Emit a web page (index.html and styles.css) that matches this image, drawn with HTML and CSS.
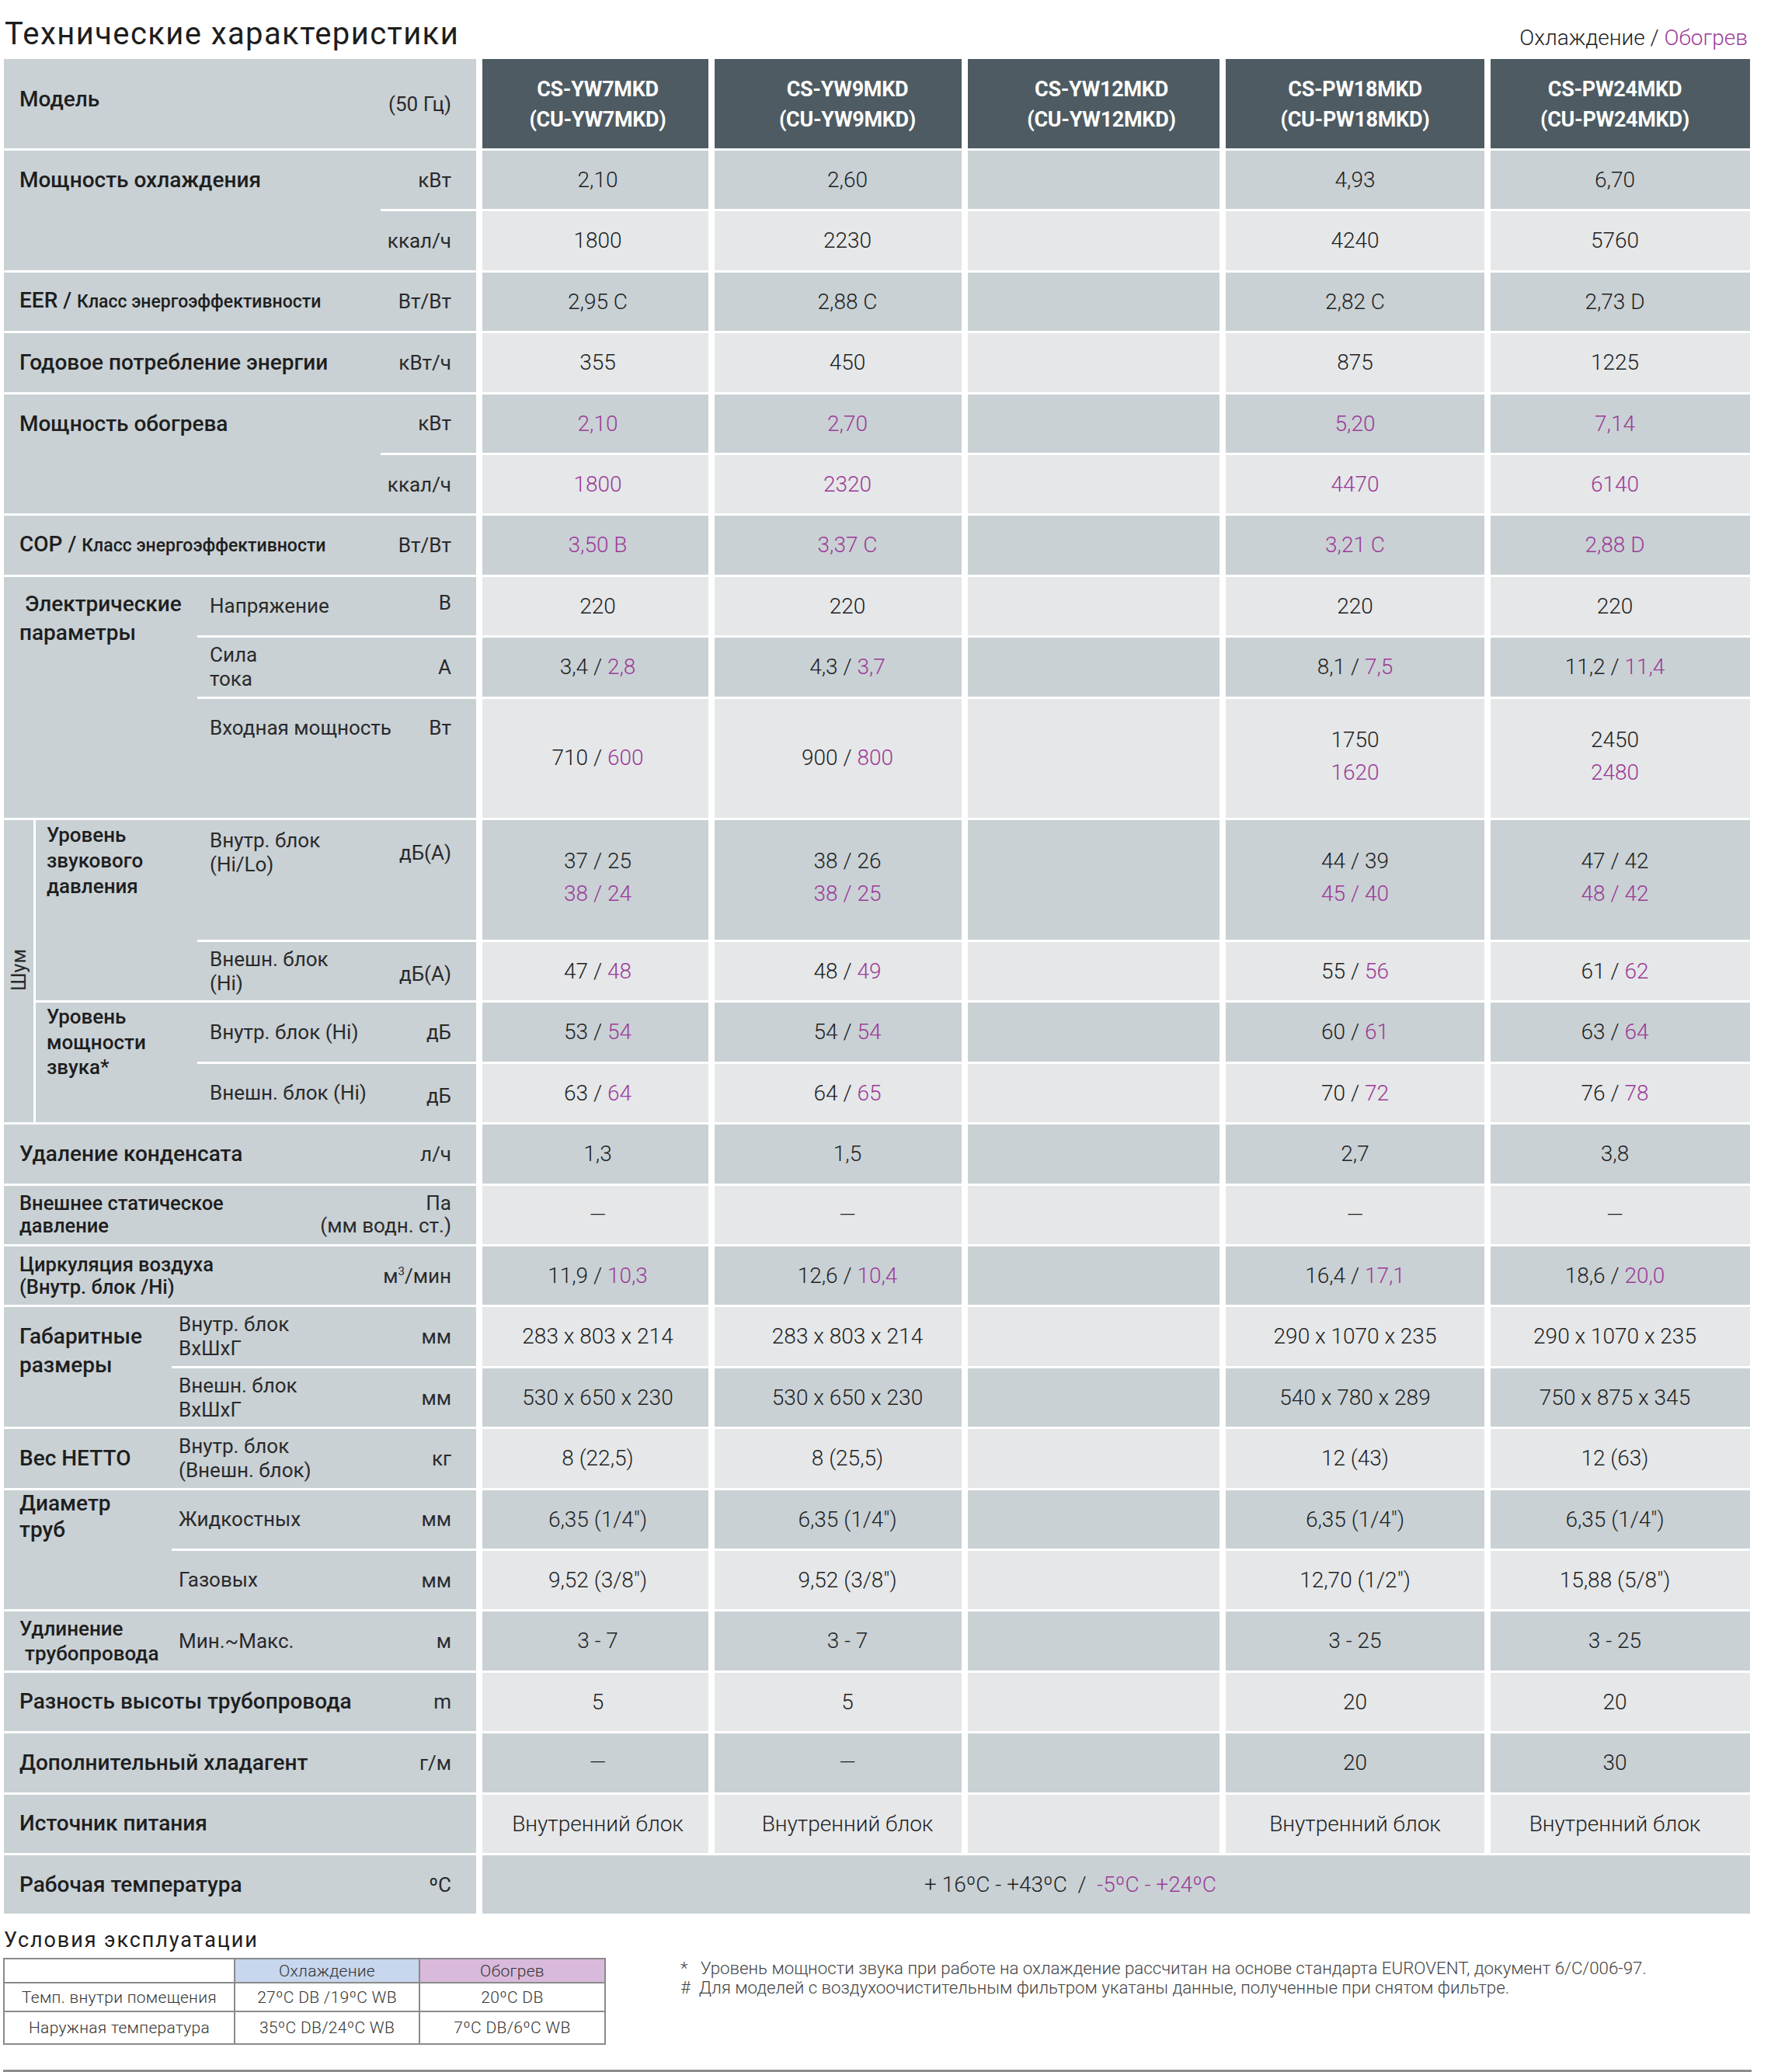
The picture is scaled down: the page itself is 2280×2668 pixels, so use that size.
FILE: index.html
```html
<!DOCTYPE html>
<html lang="ru">
<head>
<meta charset="utf-8">
<title>Технические характеристики</title>
<link rel="stylesheet" href="styles.css">
</head>
<body>
<div class="page">
  <div class="top">
    <h1 class="title">Технические характеристики</h1>
    <div class="legend">Охлаждение / <span class="p">Обогрев</span></div>
  </div>

  <div class="tbl">
    <!-- Header -->
    <div class="one hdl"><span class="m">Модель</span><span class="u">(50 Гц)</span></div>
    <div class="hd k1">CS-YW7MKD<br>(CU-YW7MKD)</div>
    <div class="hd k2">CS-YW9MKD<br>(CU-YW9MKD)</div>
    <div class="hd k3">CS-YW12MKD<br>(CU-YW12MKD)</div>
    <div class="hd">CS-PW18MKD<br>(CU-PW18MKD)</div>
    <div class="hd k5">CS-PW24MKD<br>(CU-PW24MKD)</div>

    <!-- Cooling capacity -->
    <div class="grp r2">
      <div class="gm w485 t1">Мощность охлаждения</div>
      <div class="subs">
        <div class="sub"><span></span><span class="u">кВт</span></div>
        <div class="sub"><span></span><span class="u">ккал/ч</span></div>
      </div>
    </div>
    <div class="c d k1">2,10</div><div class="c d k2">2,60</div><div class="c d"></div><div class="c d">4,93</div><div class="c d k5">6,70</div>
    <div class="c l k1">1800</div><div class="c l k2">2230</div><div class="c l"></div><div class="c l">4240</div><div class="c l k5">5760</div>

    <!-- EER -->
    <div class="one"><span class="m">EER / <span class="sm">Класс энергоэффективности</span></span><span class="u">Вт/Вт</span></div>
    <div class="c d k1">2,95 C</div><div class="c d k2">2,88 C</div><div class="c d"></div><div class="c d">2,82 C</div><div class="c d k5">2,73 D</div>

    <!-- Annual -->
    <div class="one"><span class="m">Годовое потребление энергии</span><span class="u">кВт/ч</span></div>
    <div class="c l k1">355</div><div class="c l k2">450</div><div class="c l"></div><div class="c l">875</div><div class="c l k5">1225</div>

    <!-- Heating -->
    <div class="grp r2">
      <div class="gm w485 t1">Мощность обогрева</div>
      <div class="subs">
        <div class="sub"><span></span><span class="u">кВт</span></div>
        <div class="sub"><span></span><span class="u">ккал/ч</span></div>
      </div>
    </div>
    <div class="c d p k1">2,10</div><div class="c d p k2">2,70</div><div class="c d"></div><div class="c d p">5,20</div><div class="c d p k5">7,14</div>
    <div class="c l p k1">1800</div><div class="c l p k2">2320</div><div class="c l"></div><div class="c l p">4470</div><div class="c l p k5">6140</div>

    <!-- COP -->
    <div class="one"><span class="m">COP / <span class="sm">Класс энергоэффективности</span></span><span class="u">Вт/Вт</span></div>
    <div class="c d p k1">3,50 B</div><div class="c d p k2">3,37 C</div><div class="c d"></div><div class="c d p">3,21 C</div><div class="c d p k5">2,88 D</div>

    <!-- Electrical -->
    <div class="grp r4">
      <div class="gm w249 el"><span class="ind">Электрические</span><br>параметры</div>
      <div class="subs">
        <div class="sub pl16"><span class="sl">Напряжение</span><span class="u up">В</span></div>
        <div class="sub pl16"><span class="sl">Сила<br>тока</span><span class="u">А</span></div>
        <div class="sub pl16 s2 tp"><span class="sl">Входная мощность</span><span class="u">Вт</span></div>
      </div>
    </div>
    <div class="c l k1">220</div><div class="c l k2">220</div><div class="c l"></div><div class="c l">220</div><div class="c l k5">220</div>
    <div class="c d k1">3,4 / <span class="p">2,8</span></div><div class="c d k2">4,3 / <span class="p">3,7</span></div><div class="c d"></div><div class="c d">8,1 / <span class="p">7,5</span></div><div class="c d k5">11,2 / <span class="p">11,4</span></div>
    <div class="c l s2 k1">710 / <span class="p">600</span></div><div class="c l s2 k2">900 / <span class="p">800</span></div><div class="c l s2"></div><div class="c l s2 two">1750<br><span class="p">1620</span></div><div class="c l s2 two k5">2450<br><span class="p">2480</span></div>

    <!-- Noise -->
    <div class="noise r5">
      <div class="vt"><span>Шум</span></div>
      <div class="nb">
        <div class="ng s3">
          <div class="gm w208 np">Уровень<br>звукового<br>давления</div>
          <div class="subs">
            <div class="sub pl16 s2 tp2"><span class="sl">Внутр. блок<br>(Hi/Lo)</span><span class="u">дБ(А)</span></div>
            <div class="sub pl16"><span class="sl">Внешн. блок<br>(Hi)</span><span class="u dn">дБ(А)</span></div>
          </div>
        </div>
        <div class="ng s2">
          <div class="gm w208 nw">Уровень<br>мощности<br>звука*</div>
          <div class="subs">
            <div class="sub pl16"><span class="sl">Внутр. блок (Hi)</span><span class="u">дБ</span></div>
            <div class="sub pl16"><span class="sl">Внешн. блок (Hi)</span><span class="u dn">дБ</span></div>
          </div>
        </div>
      </div>
    </div>
    <div class="c d s2 two k1">37 / 25<br><span class="p">38 / 24</span></div><div class="c d s2 two k2">38 / 26<br><span class="p">38 / 25</span></div><div class="c d s2"></div><div class="c d s2 two">44 / 39<br><span class="p">45 / 40</span></div><div class="c d s2 two k5">47 / 42<br><span class="p">48 / 42</span></div>
    <div class="c l k1">47 / <span class="p">48</span></div><div class="c l k2">48 / <span class="p">49</span></div><div class="c l"></div><div class="c l">55 / <span class="p">56</span></div><div class="c l k5">61 / <span class="p">62</span></div>
    <div class="c d k1">53 / <span class="p">54</span></div><div class="c d k2">54 / <span class="p">54</span></div><div class="c d"></div><div class="c d">60 / <span class="p">61</span></div><div class="c d k5">63 / <span class="p">64</span></div>
    <div class="c l k1">63 / <span class="p">64</span></div><div class="c l k2">64 / <span class="p">65</span></div><div class="c l"></div><div class="c l">70 / <span class="p">72</span></div><div class="c l k5">76 / <span class="p">78</span></div>

    <!-- Condensate -->
    <div class="one"><span class="m">Удаление конденсата</span><span class="u">л/ч</span></div>
    <div class="c d k1">1,3</div><div class="c d k2">1,5</div><div class="c d"></div><div class="c d">2,7</div><div class="c d k5">3,8</div>

    <!-- Static pressure -->
    <div class="one"><span class="m sm2">Внешнее статическое<br>давление</span><span class="u ur">Па<br>(мм водн. ст.)</span></div>
    <div class="c l k1">—</div><div class="c l k2">—</div><div class="c l"></div><div class="c l">—</div><div class="c l k5">—</div>

    <!-- Air circulation -->
    <div class="one"><span class="m sm2">Циркуляция воздуха<br>(Внутр. блок /Hi)</span><span class="u">м<sup>3</sup>/мин</span></div>
    <div class="c d k1">11,9 / <span class="p">10,3</span></div><div class="c d k2">12,6 / <span class="p">10,4</span></div><div class="c d"></div><div class="c d">16,4 / <span class="p">17,1</span></div><div class="c d k5">18,6 / <span class="p">20,0</span></div>

    <!-- Dimensions -->
    <div class="grp r2">
      <div class="gm w216 dm">Габаритные<br>размеры</div>
      <div class="subs">
        <div class="sub pl9"><span class="sl">Внутр. блок<br>ВхШхГ</span><span class="u">мм</span></div>
        <div class="sub pl9"><span class="sl">Внешн. блок<br>ВхШхГ</span><span class="u">мм</span></div>
      </div>
    </div>
    <div class="c l k1">283 x 803 x 214</div><div class="c l k2">283 x 803 x 214</div><div class="c l"></div><div class="c l">290 x 1070 x 235</div><div class="c l k5">290 x 1070 x 235</div>
    <div class="c d k1">530 x 650 x 230</div><div class="c d k2">530 x 650 x 230</div><div class="c d"></div><div class="c d">540 x 780 x 289</div><div class="c d k5">750 x 875 x 345</div>

    <!-- Weight -->
    <div class="grp">
      <div class="gm w216 mid">Вес НЕТТО</div>
      <div class="subs">
        <div class="sub pl9"><span class="sl">Внутр. блок<br>(Внешн. блок)</span><span class="u">кг</span></div>
      </div>
    </div>
    <div class="c l k1">8 (22,5)</div><div class="c l k2">8 (25,5)</div><div class="c l"></div><div class="c l">12 (43)</div><div class="c l k5">12 (63)</div>

    <!-- Pipe diameter -->
    <div class="grp r2">
      <div class="gm w216 pd">Диаметр<br>труб</div>
      <div class="subs">
        <div class="sub pl9"><span class="sl">Жидкостных</span><span class="u">мм</span></div>
        <div class="sub pl9"><span class="sl">Газовых</span><span class="u">мм</span></div>
      </div>
    </div>
    <div class="c d k1">6,35 (1/4")</div><div class="c d k2">6,35 (1/4")</div><div class="c d"></div><div class="c d">6,35 (1/4")</div><div class="c d k5">6,35 (1/4")</div>
    <div class="c l k1">9,52 (3/8")</div><div class="c l k2">9,52 (3/8")</div><div class="c l"></div><div class="c l">12,70 (1/2")</div><div class="c l k5">15,88 (5/8")</div>

    <!-- Pipe length -->
    <div class="grp">
      <div class="gm w216 ln">Удлинение<br><span class="ind">трубопровода</span></div>
      <div class="subs">
        <div class="sub pl9"><span class="sl">Мин.~Макс.</span><span class="u">м</span></div>
      </div>
    </div>
    <div class="c d k1">3 - 7</div><div class="c d k2">3 - 7</div><div class="c d"></div><div class="c d">3 - 25</div><div class="c d k5">3 - 25</div>

    <!-- Height difference -->
    <div class="one"><span class="m">Разность высоты трубопровода</span><span class="u">m</span></div>
    <div class="c l k1">5</div><div class="c l k2">5</div><div class="c l"></div><div class="c l">20</div><div class="c l k5">20</div>

    <!-- Refrigerant -->
    <div class="one"><span class="m">Дополнительный хладагент</span><span class="u">г/м</span></div>
    <div class="c d k1">—</div><div class="c d k2">—</div><div class="c d"></div><div class="c d">20</div><div class="c d k5">30</div>

    <!-- Power source -->
    <div class="one"><span class="m">Источник питания</span><span class="u"></span></div>
    <div class="c l k1">Внутренний блок</div><div class="c l k2">Внутренний блок</div><div class="c l"></div><div class="c l">Внутренний блок</div><div class="c l k5">Внутренний блок</div>

    <!-- Operating temperature -->
    <div class="one"><span class="m">Рабочая температура</span><span class="u">ºC</span></div>
    <div class="c d wide">+ 16ºC - +43ºC &nbsp;/&nbsp; <span class="p">-5ºC - +24ºC</span></div>
  </div>

  <div class="bottom">
    <div class="cond">
      <h2 class="ctitle">Условия эксплуатации</h2>
      <table class="ctable">
        <tr class="chead"><td></td><td class="cool">Охлаждение</td><td class="heat">Обогрев</td></tr>
        <tr class="cr1"><td>Темп. внутри помещения</td><td>27ºC DB /19ºC WB</td><td>20ºC DB</td></tr>
        <tr class="cr2"><td>Наружная температура</td><td>35ºC DB/24ºC WB</td><td>7ºC DB/6ºC WB</td></tr>
      </table>
    </div>
    <div class="notes">
      <p>*&nbsp;&nbsp; Уровень мощности звука при работе на охлаждение рассчитан на основе стандарта EUROVENT, документ 6/C/006-97.</p>
      <p>#&nbsp; Для моделей с воздухоочистительным фильтром укатаны данные, полученные при снятом фильтре.</p>
    </div>
  </div>
  <div class="rule"></div>
</div>
</body>
</html>
```

FILE: styles.css
```css
* { box-sizing: border-box; }

body {
  margin: 0;
  background: #ffffff;
  font-family: Roboto, "Noto Sans", "DejaVu Sans", sans-serif;
  color: #222222;
}

.page {
  width: 2248px;
  margin-left: 5px;
}

/* ---------- title bar ---------- */
.top {
  height: 76px;
  display: flex;
  justify-content: space-between;
  align-items: flex-end;
  padding-bottom: 12px;
}

.title {
  margin: 0 0 0 1px;
  font-size: 40px;
  font-weight: 400;
  letter-spacing: 1.4px;
  line-height: 40px;
  color: #1d1d1d;
}

.legend {
  font-size: 28px;
  font-weight: 300;
  line-height: 30px;
  color: #222;
  margin-right: 3px;
}

.p { color: #9c3c98; }

/* ---------- main table ---------- */
.tbl {
  display: grid;
  grid-template-columns: 608px 291px 318px 324px 333px 334px;
  grid-template-rows: 115px;
  grid-auto-rows: 75.4px;
  column-gap: 8px;
  row-gap: 3px;
}

.hd {
  background: #4e5b62;
  color: #ffffff;
  font-size: 27px;
  font-weight: 700;
  line-height: 39px;
  text-align: center;
  padding-top: 20px;
  letter-spacing: -0.3px;
}

/* per-column horizontal offsets of centred content */
.k1 { padding-left: 6px; }
.k2 { padding-left: 24px; }
.k3 { padding-left: 20px; }
.k5 { padding-right: 14px; }

.one {
  grid-column: 1;
  background: #c9d1d5;
  display: flex;
  justify-content: space-between;
  align-items: center;
  padding: 0 32px 0 20px;
}

.hdl .m { margin-bottom: 12px; }

.m {
  font-size: 28px;
  font-weight: 500;
  line-height: 32px;
  color: #1e1e1e;
}

.m .sm {
  font-size: 23px;
  font-weight: 500;
}

.m.sm2 {
  font-size: 25.5px;
  line-height: 29px;
}

.u {
  font-size: 26px;
  font-weight: 400;
  line-height: 30px;
  color: #2a2a2a;
  text-align: right;
}

.u sup {
  font-size: 15px;
  line-height: 0;
  vertical-align: 10px;
}

.ur { line-height: 29px; }
.up { margin-bottom: 8px; }
.dn { margin-top: 6px; }

/* grouped labels */
.grp {
  grid-column: 1;
  background: #c9d1d5;
  display: flex;
}

.r2 { grid-row: span 2; }
.r4 { grid-row: span 4; }
.r5 { grid-row: span 5; }

.gm {
  flex: none;
  padding-left: 20px;
  font-size: 28px;
  font-weight: 500;
  color: #1e1e1e;
  line-height: 32px;
}

.w485 { width: 485px; }
.w249 { width: 249px; }
.w216 { width: 216px; }
.w208 { width: 208px; padding-left: 14px; }

.t1 { padding-top: 22px; }
.el { padding-top: 16px; line-height: 37px; }
.np { padding-top: 3px; line-height: 33px; font-size: 26px; }
.nw { padding-top: 2px; line-height: 32.5px; font-size: 26px; }
.dm { padding-top: 19px; line-height: 37px; }
.pd { padding-top: 0; line-height: 34px; }
.mid { display: flex; flex-direction: column; justify-content: center; }
.ln { font-size: 26px; line-height: 32px; padding-top: 6px; }

.ind { padding-left: 7px; }

.subs {
  flex: 1;
  display: grid;
  grid-auto-rows: 1fr;
  row-gap: 3px;
  background: #ffffff;
}

.sub {
  background: #c9d1d5;
  display: flex;
  justify-content: space-between;
  align-items: center;
  padding-right: 32px;
}

.s2 { grid-row: span 2; }
.s3 { grid-row: span 3; }

.pl16 { padding-left: 16px; }
.pl9 { padding-left: 9px; }

.sl {
  font-size: 26px;
  font-weight: 400;
  line-height: 31px;
  color: #2a2a2a;
}

.sub.tp {
  align-items: flex-start;
  padding-top: 22px;
}

.sub.tp2 {
  align-items: flex-start;
  padding-top: 11px;
}

.sub.tp2 .u { margin-top: 16px; }

/* noise block */
.noise {
  grid-column: 1;
  display: flex;
  gap: 3px;
  background: #ffffff;
}

.vt {
  width: 38px;
  flex: none;
  background: #c9d1d5;
  display: flex;
  align-items: center;
  justify-content: center;
}

.vt span {
  writing-mode: vertical-rl;
  transform: rotate(180deg);
  font-size: 25px;
  font-weight: 400;
  color: #2a2a2a;
  padding-top: 4px;
}

.nb {
  flex: 1;
  display: grid;
  grid-auto-rows: 1fr;
  row-gap: 3px;
}

.ng {
  background: #c9d1d5;
  display: flex;
}

/* data cells */
.c {
  text-align: center;
  font-size: 28px;
  font-weight: 300;
  line-height: 75.4px;
  color: #1f1f1f;
  white-space: nowrap;
}

.c.s2 { line-height: 151.8px; }
.c.two { line-height: 42px; padding-top: 32px; }
.c.p { color: #9c3c98; }

.d { background: #c9d1d5; }
.l { background: #e5e7e9; }

.wide {
  grid-column: span 5;
  padding-right: 118px;
}

/* ---------- bottom ---------- */
.bottom {
  display: flex;
  align-items: flex-start;
}

.cond {
  width: 776px;
  flex: none;
  margin-left: -1px;
}

.ctitle {
  margin: 19px 0 8px 1px;
  font-size: 27px;
  font-weight: 400;
  line-height: 30px;
  letter-spacing: 1.9px;
  color: #1d1d1d;
}

.ctable {
  border-collapse: collapse;
  width: 776px;
  table-layout: fixed;
}

.ctable td {
  border: 2px solid #8a8a8a;
  font-size: 21px;
  font-weight: 300;
  color: #333;
  text-align: center;
  padding: 0;
  letter-spacing: 0.3px;
}

.ctable td:nth-child(1) { width: 297px; }
.ctable td:nth-child(2) { width: 238px; }

.chead td { height: 31px; }
.cr1 td { height: 37px; }
.cr2 td { height: 42px; }

.ctable .cool { background: #c8d6ee; }
.ctable .heat { background: #d9badc; }

.notes {
  margin: 58px 0 0 96px;
}

.notes p {
  margin: 0;
  font-size: 22.3px;
  font-weight: 300;
  line-height: 25px;
  color: #444;
}

.rule {
  margin-top: 32px;
  width: 2251px;
  margin-left: -1px;
  height: 3px;
  background: #8c8c8c;
}
```
